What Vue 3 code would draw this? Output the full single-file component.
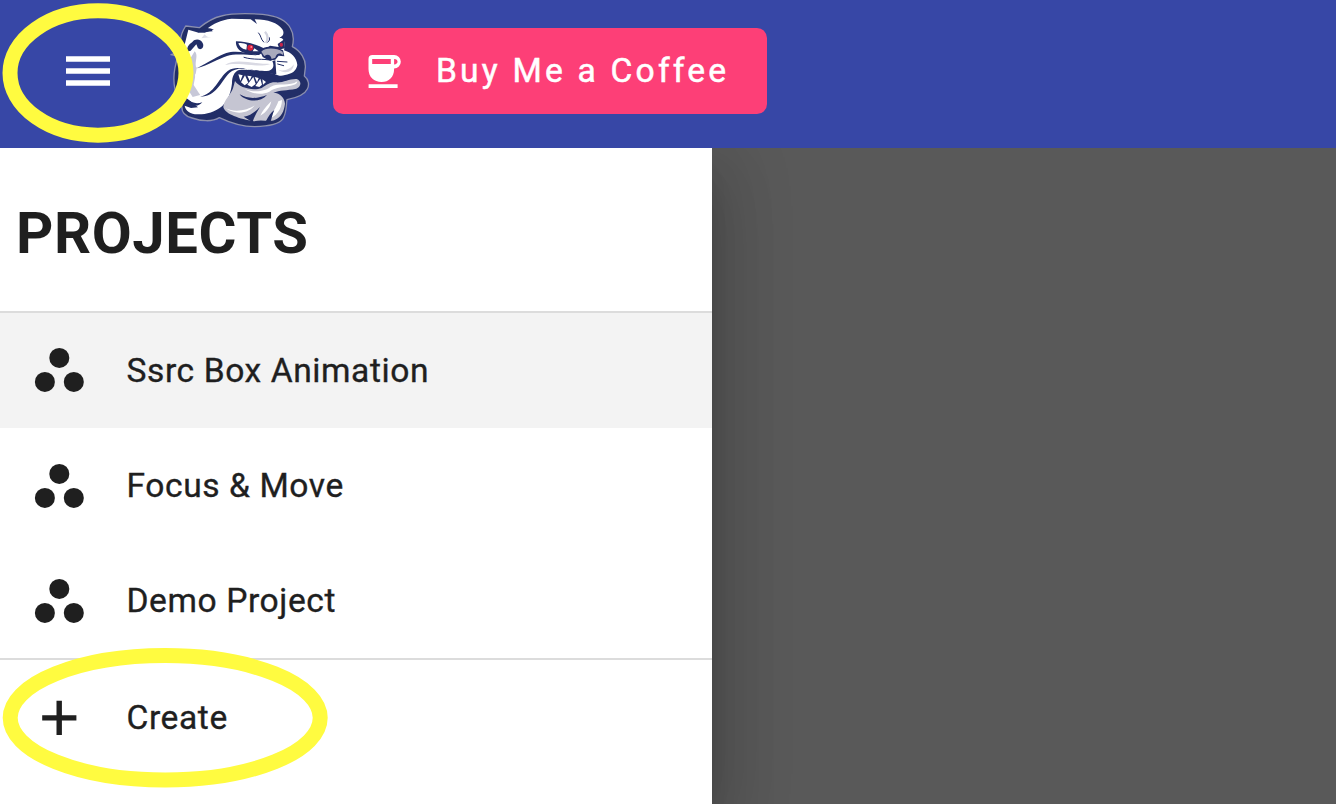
<script setup>
const projects = [
  { name: 'Ssrc Box Animation', active: true },
  { name: 'Focus & Move', active: false },
  { name: 'Demo Project', active: false },
]
</script>

<template>
  <div class="app">
    <header class="bar">
      <button class="menu" aria-label="Menu">
        <svg width="44" height="30" viewBox="0 0 44 30" fill="#fff">
          <path d="M0 .2h44v5.6H0zM0 12.2h44v5.6H0zM0 24.2h44v5.6H0z" />
        </svg>
      </button>

      <svg class="logo" width="150" height="130" viewBox="0 0 450 390">
        <!-- outline -->
        <path d="M62 63 L103 68 C123 52 142 39 169 33 C203 24 253 25 293 28 C333 32 363 44 376 69 C387 87 387 105 382 125 C407 138 423 163 421 188 L418 213 C432 224 433 241 427 252 C419 269 398 278 366 284 C363 304 365 323 354 341 C343 358 314 364 269 365 C234 365 192 352 163 338 C142 351 109 349 81 339 C58 333 48 318 51 299 C31 275 21 232 30 188 L38 153 L18 149 L42 142 L50 120 C43 103 50 82 62 63Z" fill="#222e67" stroke="#8b8fae" stroke-width="4" stroke-linejoin="round" />
        <!-- head -->
        <path d="M70 74 L96 82 L119 83 L147 73 L128 70 C144 57 166 45 200 41 L257 43 L276 57 L269 43 C310 43 338 54 352 73 C359 84 355 94 343 98 C360 98 361 119 357 136 C378 142 395 158 397 180 C394 198 380 207 360 210 C350 214 340 213 329 207 C300 201 262 192 222 195 C207 201 201 215 201 235 C198 262 190 285 172 303 C150 322 120 329 97 328 C77 328 61 317 59 302 L78 309 L99 307 L64 279 L47 245 L44 180 L55 135Z" fill="#fff" />
        <path d="M89 139 C101 151 89 167 93 187 L103 191 L90 210 L105 270 L83 276 L60 240 L57 192Z" fill="#c7c8d8" />
        <path d="M95 190 L120 188 L104 268 L86 240Z" fill="#fff" />
        <path d="M82 111 C92 99 108 103 114 116 C118 128 107 137 99 130 L94 118 L77 137 L66 140 C65 128 70 118 82 111Z M139 71 L110 69 L97 83 L143 79Z" fill="#222e67" />
        <path d="M119 88 C124 96 131 97 140 96 L109 100Z" fill="#dedfe9" />
        <!-- cheek folds -->
        <path d="M95 190 C131 172 159 152 184 144 C207 136 245 141 276 151 C245 149 208 145 186 153 C159 162 131 180 95 190Z M105 275 C149 266 160 220 188 198 C204 186 222 188 240 191 C218 190 204 195 193 204 C165 233 155 274 105 275Z M64 280 C81 294 92 298 112 292 C96 310 77 303 64 280Z" fill="#222e67" />
        <path d="M222 190 C260 193 290 201 312 197 C326 193 328 181 322 168 L331 166 L334 208 C300 206 262 192 222 190Z" fill="#222e67" />
        <path d="M228 186 C262 190 300 196 320 184 C318 192 308 194 296 194 C270 195 250 190 228 186Z" fill="#fff" />
        <path d="M237 157 C265 166 295 160 318 166 M337 169 L366 171 M338 177 L356 182" fill="none" stroke="#222e67" stroke-width="3" stroke-linecap="round" />
        <!-- eyes and nose -->
        <path d="M213 109 C240 110 270 116 301 132 L315 122 L341 126 L338 117 L358 103 L360 130 L340 134 L300 137 L282 150 C256 150 231 144 222 134 C214 126 212 116 213 109Z" fill="#222e67" />
        <path d="M220 115 C230 113 240 116 246 119 L244 134 C232 133 224 125 220 115Z M268 130 L281 139 L263 139Z" fill="#fff" />
        <ellipse cx="256" cy="128" rx="9" ry="9" fill="#d9203b" /><circle cx="259" cy="126" r="3" fill="#ff8c99" />
        <ellipse cx="349" cy="119" rx="5" ry="6" fill="#c7264b" />
        <path d="M285 138 C294 122 327 121 354 136 L358 154 L341 152 L331 164 L319 166 L309 165 L293 156Z" fill="#222e67" />
        <path d="M289 140 C300 127 335 128 353 140 L355 151 C345 141 334 145 331 158 L320 162 C316 149 309 146 298 154Z" fill="#a9aabd" />
        <path d="M280 83 C289 92 286 102 297 112 M313 97 Q317 105 307 113" fill="none" stroke="#222e67" stroke-width="3" />
        <path d="M300 80 Q314 96 303 114" fill="none" stroke="#d2d3df" stroke-width="7" />
        <!-- mouth and teeth -->
        <path d="M212 204 L232 201 L282 209 L331 217 C356 225 376 214 398 218 C413 228 409 242 397 248 L342 253 L309 264 C278 266 238 257 218 237Z" fill="#222e67" />
        <path d="M220 208 L233 211 L226 228Z M240 211 L250 233 L239 241 L228 232Z M247 212 L260 214 L254 227Z M265 216 L272 237 L260 246 L247 239Z M269 216 L281 219 L276 232Z M286 221 L291 239 L283 246 L271 243Z M292 223 L303 231 L294 239Z" fill="#fff" />
        <!-- lower jaw -->
        <path d="M210 228 C222 247 262 259 290 249 C306 239 315 231 332 232 C355 234 372 221 395 222 C411 228 409 245 394 251 C364 257 344 255 325 263 C347 263 359 281 360 296 C357 319 350 335 329 345 C313 351 289 343 267 349 C224 342 181 328 175 307 C174 289 197 270 204 250Z" fill="#c5c5d2" />
        <path d="M238 251 C267 265 301 258 316 246 C342 232 374 246 397 229 C396 250 340 239 313 260 C285 273 255 263 238 251Z M182 310 C209 324 249 316 269 301 C255 323 215 333 182 310Z M351 285 C351 315 330 337 309 342 C324 321 333 309 340 289Z M319 289 C314 313 296 327 286 332 C296 313 304 304 319 289Z" fill="#fff" />
        <path d="M224 268 C247 281 272 283 306 270 C291 287 264 291 244 282 C234 279 228 274 224 268Z M236 335 C255 333 272 320 285 306 C276 321 266 338 263 352Z M303 348 C311 333 318 322 328 315 C322 328 320 340 317 349Z" fill="#222e67" />
        <path d="M180 180 C204 163 244 171 274 174 C293 177 309 176 316 177 C291 186 252 179 222 177 C204 176 192 177 180 180Z M339 194 C354 200 376 194 386 178 C387 200 360 209 339 194Z" fill="#d9d9e3" />
      </svg>

      <button class="coffee">
        <svg width="34" height="34" viewBox="0 0 34 34" fill="#fff">
          <path fill-rule="evenodd" d="M4.5 0h21.6a6.7 6.7 0 0 1 0 13.4v.5C26.1 22 20.9 27 13.5 27S.5 22 .5 14V4a4 4 0 0 1 4-4ZM4.2 4v5h18.6V4ZM26.1 4v5.4c4.6 0 4.6-5.4 0-5.4ZM.6 29.2h29v3.7H.6Z" />
        </svg>
        <span>Buy Me a Coffee</span>
      </button>
    </header>

    <main class="content">
      <nav class="drawer">
        <h1>PROJECTS</h1>
        <ul>
          <li v-for="p in projects" :key="p.name" :class="{ active: p.active }">
            <svg width="50" height="46" viewBox="0 0 50 46" fill="#1f1f1f">
              <circle cx="25.3" cy="10.9" r="10" /><circle cx="10.9" cy="34.9" r="10" /><circle cx="39.8" cy="34.9" r="10" />
            </svg>
            <span>{{ p.name }}</span>
          </li>
        </ul>
        <div class="create">
          <svg width="50" height="46" viewBox="0 0 50 46" fill="#1f1f1f">
            <path d="M22.5 5.7h5.4v14.5h14.5v5.2H27.9V40h-5.4V25.4H8.2v-5.2h14.3Z" />
          </svg>
          <span>Create</span>
        </div>
      </nav>
    </main>

    <svg class="marks" width="1336" height="804" viewBox="0 0 1336 804" fill="none" stroke="#fffb40" stroke-width="15">
      <ellipse cx="98" cy="73" rx="88" ry="62.2" />
      <ellipse cx="165.2" cy="717.8" rx="155" ry="62.2" />
    </svg>
  </div>
</template>

<style>
body { margin: 0; overflow: hidden; }
</style>

<style scoped>
.app {
  position: relative;
  width: 1336px;
  height: 804px;
  display: flex;
  flex-direction: column;
  overflow: hidden;
  font-family: Roboto, sans-serif;
  color: #1f1f1f;
}
button { border: 0; padding: 0; background: none; font: inherit; color: #fff; }
.bar {
  height: 148px;
  flex: none;
  display: flex;
  align-items: flex-start;
  background: #3747a6;
}
.menu { display: flex; margin: 56px 55px 0 66px; }
.logo { display: block; flex: none; margin-top: 5px; }
.coffee {
  display: flex;
  align-items: center;
  box-sizing: border-box;
  width: 434px;
  height: 86px;
  margin: 28px 0 0 18px;
  padding-left: 35px;
  gap: 34px;
  border-radius: 10px;
  background: #fd3f77;
  font-size: 33.6px;
  font-weight: 400;
  letter-spacing: 3.2px;
  white-space: nowrap;
  -webkit-text-stroke: .5px currentColor;
}
.coffee svg { margin-top: 1px; }
.coffee span { padding-bottom: 2px; }
.content { flex: 1; min-height: 0; background: #595959; overflow: hidden; }
.drawer {
  width: 712px;
  height: 656px;
  background: #fff;
  box-shadow: 0 19px 24px -12px rgba(0, 0, 0, .2), 0 38px 58px 5px rgba(0, 0, 0, .14), 0 14px 72px 12px rgba(0, 0, 0, .12);
}
h1 {
  box-sizing: border-box;
  height: 163px;
  margin: 0;
  padding: 50px 0 0 16px;
  font-size: 58px;
  line-height: 70px;
  font-weight: 700;
  letter-spacing: .6px;
}
ul {
  list-style: none;
  margin: 0;
  padding: 0;
  border-top: 2px solid #dcdcdc;
  border-bottom: 2px solid #dcdcdc;
}
li, .create {
  display: flex;
  align-items: center;
  height: 115px;
  padding-left: 34px;
  gap: 42.5px;
  font-size: 33.6px;
  letter-spacing: .58px;
  -webkit-text-stroke: .35px currentColor;
}
.active { background: #f3f3f3; }
.active svg { margin-bottom: 2px; }
.create { height: 116px; }
.create span { padding-bottom: 2px; }
.marks { position: absolute; left: 0; top: 0; pointer-events: none; }
</style>
